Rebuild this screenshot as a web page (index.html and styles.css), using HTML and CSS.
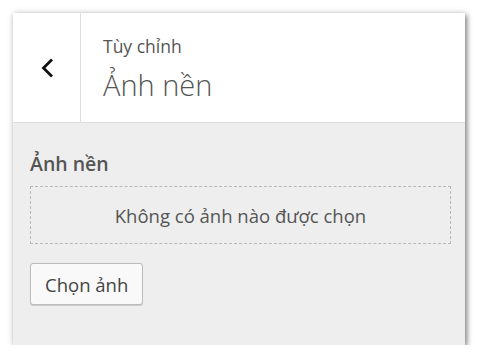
FILE: index.html
```html
<!DOCTYPE html>
<html lang="vi">
<head>
    <meta charset="UTF-8">
    <title>Ảnh nền</title>
    <link rel="stylesheet" href="styles.css">
</head>
<body>
    <div class="panel">
        <div class="panel-header">
            <button class="back-btn" type="button" aria-label="Quay lại">
                <svg width="18" height="22" viewBox="0 0 18 22">
                    <path d="M14 2.5 L5.5 11 L14 19.5" fill="none" stroke="#111" stroke-width="2.8"/>
                </svg>
            </button>
            <div class="panel-title">
                <span class="crumb">Tùy chỉnh</span>
                <h1>Ảnh nền</h1>
            </div>
        </div>
        <div class="panel-body">
            <h2>Ảnh nền</h2>
            <div class="placeholder">Không có ảnh nào được chọn</div>
            <button class="select-btn" type="button">Chọn ảnh</button>
        </div>
    </div>
</body>
</html>
```

FILE: styles.css
```css
body {
    margin: 0;
    background: #fff;
    font-family: 'Open Sans', 'Noto Sans', Arial, sans-serif;
    color: #555;
}
.panel {
    margin: 13px 0 0 13px;
    width: 452px;
    height: 332px;
    background: #eee;
    box-shadow: 2px 2px 5px rgba(0,0,0,0.45), 0 0 8px rgba(0,0,0,0.12);
    display: flex;
    flex-direction: column;
}
.panel-header {
    display: flex;
    height: 109px;
    background: #fff;
    border-bottom: 1px solid #ddd;
}
.back-btn {
    width: 68px;
    border: none;
    border-right: 1px solid #ddd;
    background: #fff;
    padding: 0;
    display: flex;
    align-items: center;
    justify-content: center;
}
.panel-title {
    padding: 20px 0 0 22px;
}
.crumb {
    display: block;
    font-size: 17.5px;
    line-height: 26px;
}
h1 {
    margin: 0;
    font-size: 29px;
    font-weight: 300;
    line-height: 52px;
}
.panel-body {
    padding: 28px 14px 0 17px;
}
h2 {
    margin: 0 0 9px 0;
    font-size: 19.5px;
    font-weight: 600;
    line-height: 26px;
}
.placeholder {
    border: 1px dashed #b4b9be;
    height: 56px;
    display: flex;
    align-items: center;
    justify-content: center;
    font-size: 18.5px;
}
.select-btn {
    margin-top: 19px;
    height: 42px;
    padding: 0 14px;
    border: 1px solid #bbb;
    border-radius: 3px;
    background: #f9f9f9;
    color: #444;
    font-family: inherit;
    font-size: 18.5px;
    box-shadow: 0 1px 0 #ccc;
}
```
